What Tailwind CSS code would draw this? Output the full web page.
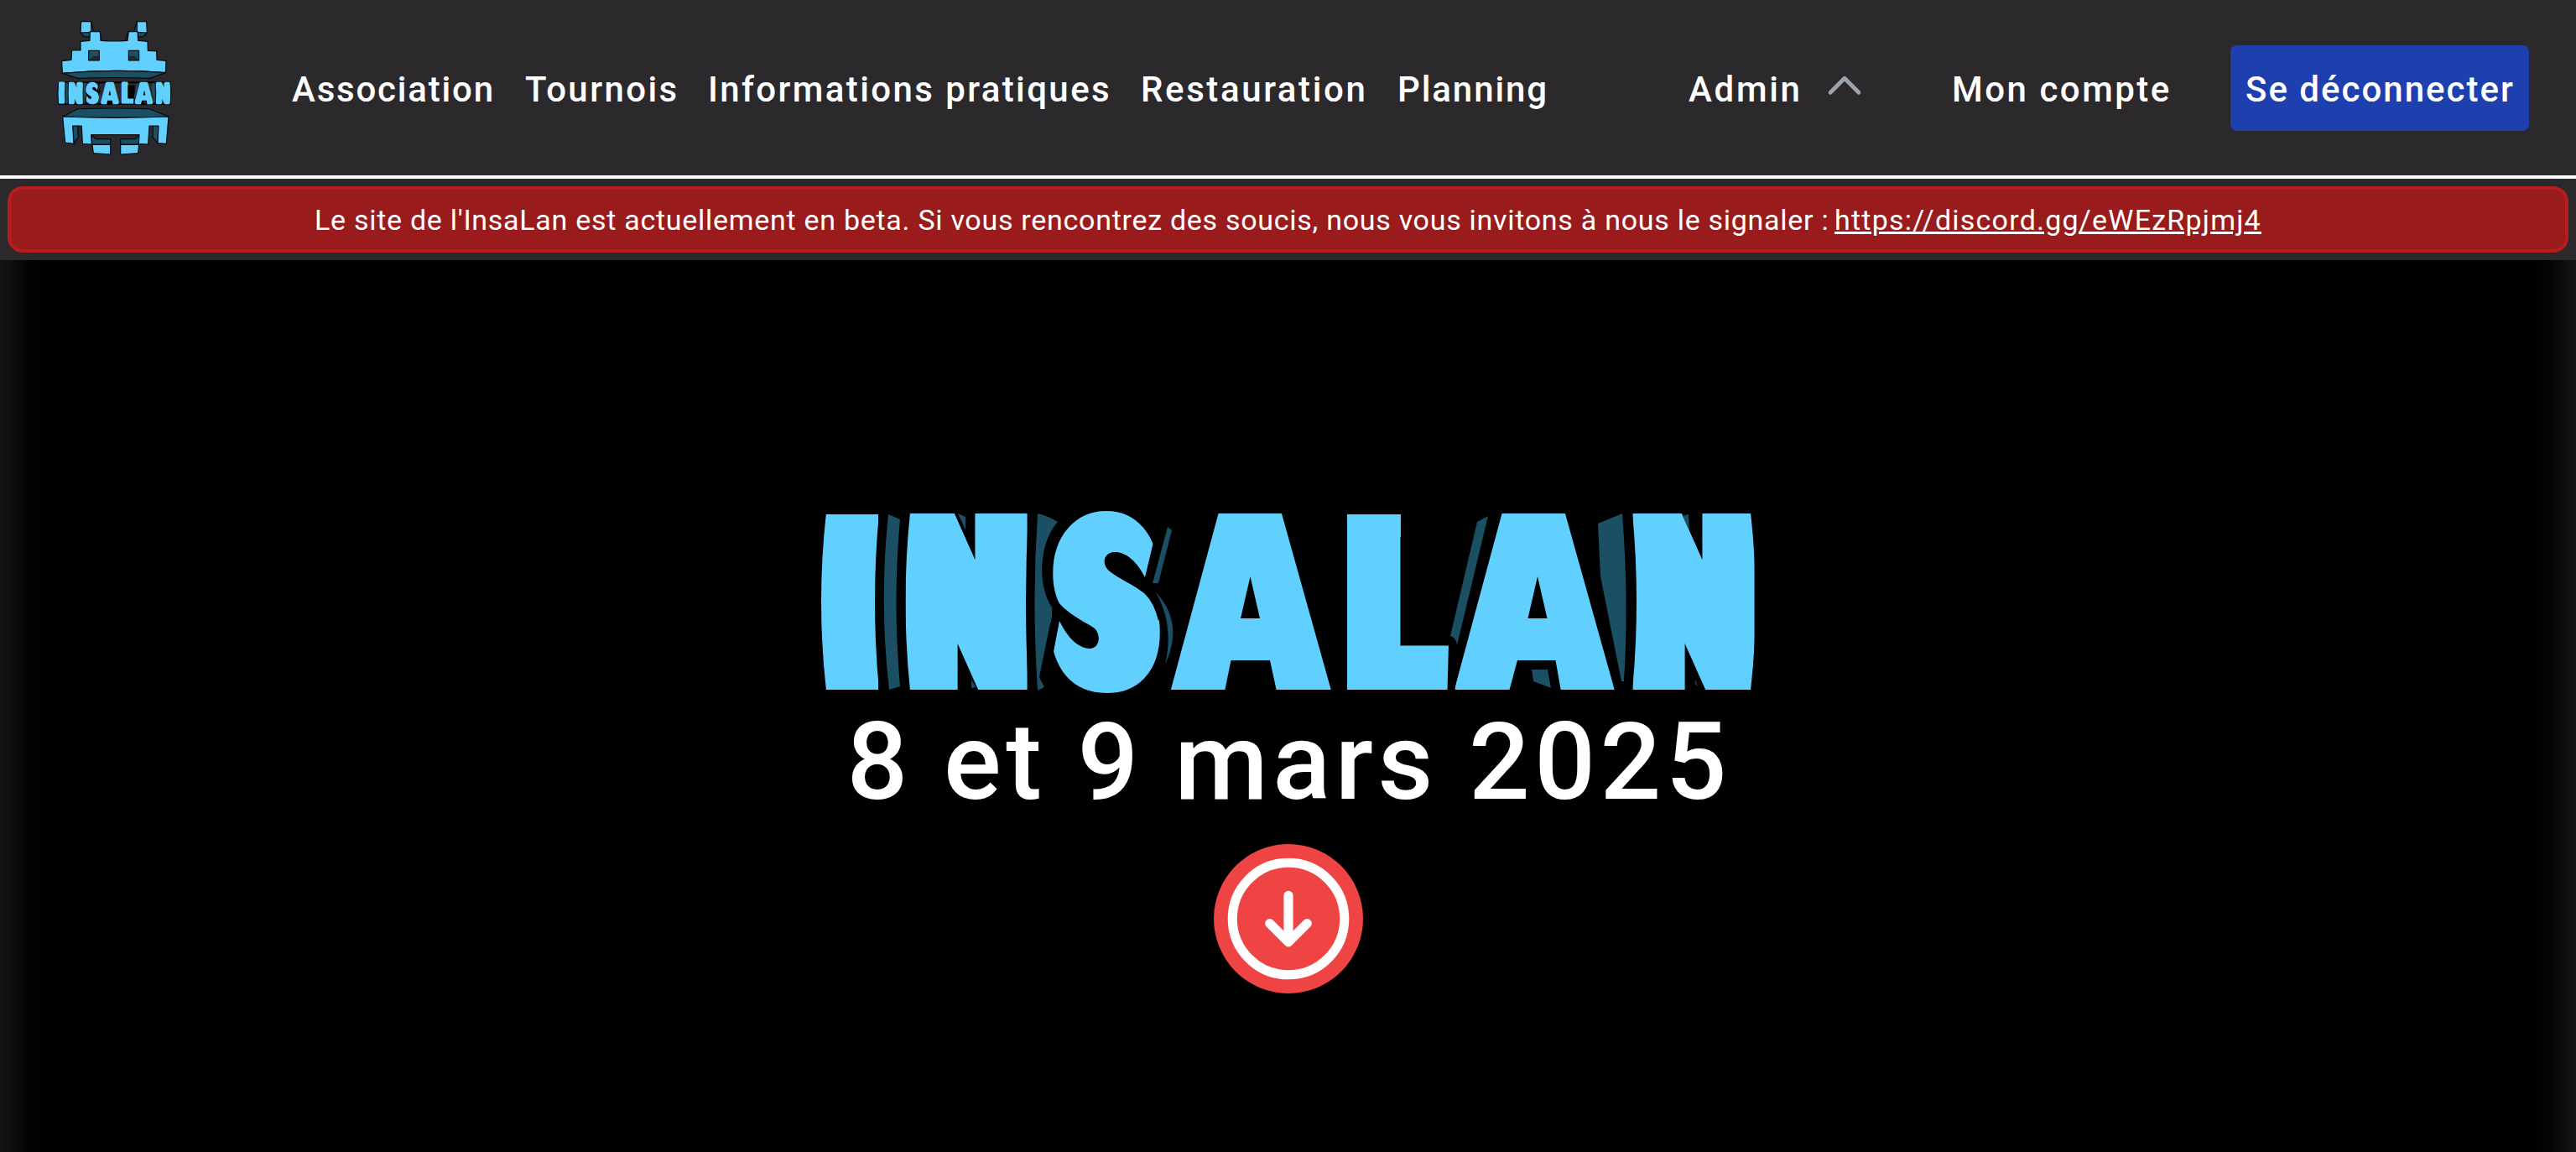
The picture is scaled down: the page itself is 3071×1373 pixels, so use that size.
<!DOCTYPE html>
<html lang="fr">
<head>
<meta charset="utf-8">
<title>InsaLan</title>
<script src="https://cdn.jsdelivr.net/npm/@tailwindcss/browser@4"></script>
</head>
<body class="h-screen overflow-hidden bg-black text-white font-['Roboto',sans-serif] flex flex-col">
  <header class="h-[213px] shrink-0 bg-[#2c292d] border-b-4 border-white flex items-center text-[42px] font-medium whitespace-nowrap">
    <svg class="ml-10 w-[200px] h-[209px] shrink-0" viewBox="0 0 600 627" stroke="#050a0c" stroke-width="3.5" stroke-linejoin="round">
      <!-- antennas -->
      <g fill="#1b4f63">
        <path d="M206 77L214 110L196 133L180 130L168 117Z"/><path d="M370 77L360 110L378 133L394 130L406 117Z"/>
        <path d="M236 113L245 147H238Z"/><path d="M338 113L329 147H338Z"/>
      </g>
      <g fill="#62d0ff">
        <path d="M170 77H206V115L168 117Z"/><path d="M370 77H404L406 117L370 115Z"/>
        <path d="M168 148L201 145L202 113H238L240 145Q288 149 336 145L340 113H372L374 145L408 148L409 181L440 183L441 214L474 217L472 260Q288 245 103 262L101 218L135 214L137 180L168 180Z"/>
      </g>
      <path fill="#1b4f63" d="M103 262Q288 245 472 260L416 280Q288 275 158 280Z"/>
      <g fill="#1b4f63"><path d="M197 181H235V216H197Z"/><path d="M340 181H377V216H340Z"/></g>
      <g fill="#2c292d" stroke-width="2"><path d="M214 203H234V215H199Z"/><path d="M341 203H360L375 215H341Z"/></g>
      <!-- lower body -->
      <g fill="#1b4f63">
        <path d="M104 417L158 390Q288 384 416 390L483 417Q290 425 104 417Z"/>
        <path d="M140 450H158L160 490L144 514Z"/><path d="M447 450H428L426 490L444 512Z"/>
        <path d="M206 482L222 497H275V517H210Z"/><path d="M378 482L365 497H311V517H376Z"/>
      </g>
      <g fill="#62d0ff">
        <path d="M104 417Q290 425 483 417L475 514L444 512L447 450H414L410 516L376 514L378 482H206L208 516L175 514L172 450H140L144 514L113 510Z"/>
        <path d="M210 517H275V552L214 548Z"/><path d="M311 517H377L374 548L311 552Z"/>
      </g>
      <use href="#word" stroke="none" transform="translate(-265.5 70.5) scale(.361 .3665)"/>
    </svg>
    <nav class="ml-[108px] pt-1 flex">
      <a class="w-[278px] tracking-[1.8px]">Association</a>
      <a class="w-[218px] tracking-[2.4px]">Tournois</a>
      <a class="w-[516px] tracking-[2.4px]">Informations pratiques</a>
      <a class="w-[306px] tracking-[2.6px]">Restauration</a>
      <a class="w-[347px] tracking-[1.9px]">Planning</a>
      <a class="w-[157px] tracking-[2.7px]">Admin</a>
    </nav>
    <svg class="size-[58px] shrink-0 -mt-1" viewBox="0 0 24 24" fill="none" stroke="#9ca3af" stroke-width="2" stroke-linecap="round" stroke-linejoin="round"><path d="M5 15l7-7 7 7"/></svg>
    <a class="ml-[99px] w-[332px] pt-1 tracking-[2.5px]">Mon compte</a>
    <button class="w-[356px] h-[102px] mt-px pl-[18px] pt-[3px] rounded-[8px] bg-[#1e40af] text-left font-medium tracking-[2px]">Se déconnecter</button>
  </header>

  <div class="h-[97px] shrink-0 bg-[#2c292d] p-[9px]">
    <p class="h-[79px] pt-0.5 flex items-center bg-[#991b1b] border-4 border-[#b91c1c] rounded-[18px] text-[34px] whitespace-nowrap pl-[362px]">
      <span class="w-[1812px] tracking-[0.72px]">Le site de l'InsaLan est actuellement en beta. Si vous rencontrez des soucis, nous vous invitons à nous le signaler :</span>
      <a class="underline tracking-[1.22px]">https://discord.gg/eWEzRpjmj4</a>
    </p>
  </div>

  <main class="grow flex flex-col items-center pt-[280px] bg-[linear-gradient(to_right,#151417,#0d0d0e_16px,#040404_32px,#000_54px,#000_calc(100%-54px),#040404_calc(100%-32px),#0d0d0e_calc(100%-16px),#151417)]">
    <svg class="w-[1172px] h-[250px] shrink-0" viewBox="950 590 1172 250">
      <g id="word">
        <!-- black outline behind the whole word -->
        <path fill="none" stroke="#000" stroke-width="18" stroke-linejoin="round" d="M985 612H1226L1250 612H1380L1450 612H1920L2088 612Q2098 717 2088 822H985Q973 717 985 612"/>
        <g fill="#62d0ff" stroke="#62d0ff" stroke-width="36" font-family="Inter, sans-serif" font-weight="900" font-size="239.5">
          <text transform="translate(980 809) scale(.9 1)" font-size="251.7" stroke-width="26">I</text>
          <text transform="translate(1084.500 804) scale(.733 1)">N</text>
          <text transform="translate(1260 806) scale(.71 1)" font-size="243">S</text>
          <text transform="translate(1412 804) scale(.832 1)">A</text>
          <text transform="translate(1607 809) scale(.845 1)" font-size="251.7" stroke-width="26">L</text>
          <text transform="translate(1750 804) scale(.832 1)">A</text>
          <text transform="translate(1951.500 804) scale(.733 1)">N</text>
        </g>
        <!-- cut-outs -->
        <g fill="#000">
          <path d="M976 611H985Q973 717 985 823H976Z"/><path d="M1052 611H1048Q1038 717 1048 823H1052Z"/>
          <path d="M1076 611H1085Q1074 717 1085 823H1076Z"/><path d="M1229 611H1226Q1220 717 1226 824H1229Z"/>
          <path d="M1942 611H1946Q1956 717 1946 823H1942Z"/><path d="M2096 611H2087Q2099 717 2087 823H2096Z"/>
          <path d="M1365 688C1352 662 1336 657 1328 658C1315 659 1313 673 1323 681C1334 690 1352 697 1364 707Q1376 718 1381 740L1396 705L1392 626L1381 621Z"/>
          <path d="M1263 740C1274 763 1288 773 1299 773C1311 773 1313 757 1305 749C1296 742 1276 735 1259 715L1248 712L1254 733L1238 809L1249.500 811Z"/>
          <path d="M1490.500 687L1502 737H1479Z"/><path d="M1467.500 787H1514L1522 824H1460Z"/>
          <path d="M1669.500 640H1738V769.500H1669.500Z"/><path d="M1727 768H1740L1734.500 823H1725.500Z"/>
          <path d="M1833 687L1844.500 737H1821.500Z"/><path d="M1809 787H1854.500L1861 824H1799Z"/>
        </g>
        <!-- extruded sides -->
        <g fill="#1b4f63">
          <path d="M1059 613L1073 619Q1064 718 1073 818L1060 822Q1048 718 1059 613Z"/>
          <path d="M1142 612L1151 616V632Z"/><path d="M1158 810L1163 819L1158 820Z"/>
          <path d="M1237 612Q1250 615 1261 622C1240 645 1235 695 1254 724V733L1239 807L1245 819L1237 823Q1230 717 1237 612Z"/>
          <path d="M1392 628L1397 632L1381 695H1374Z"/><path d="M1378 706Q1412 742 1389 792Q1400 745 1378 706Z"/>
          <path d="M1761 622L1774 615L1737 769Q1736 760 1729 758Z"/>
          <path d="M1905 624L1934 612Q1942 715 1936 812H1933L1908 687Z"/>
          <path d="M1826 798H1845L1849 820L1828 812Z"/>
          <path d="M2006 615L2013 613L2014 632Z"/><path d="M2021 810L2024 818L2021 815Z"/>
        </g>
      </g>
    </svg>
    <h1 class="mt-1 h-[128px] leading-[128px] w-[1052px] text-[128px] font-medium tracking-[5.5px] whitespace-nowrap">8 et 9 mars 2025</h1>
    <div class="mt-[34px] size-[178px] shrink-0 rounded-full bg-[#ef4444]">
      <svg class="size-full" viewBox="0 0 24 24" fill="none" stroke="#fff" stroke-width="1.5" stroke-linecap="round" stroke-linejoin="round"><path d="m9 12.75 3 3m0 0 3-3m-3 3v-7.5M21 12a9 9 0 1 1-18 0 9 9 0 0 1 18 0Z"/></svg>
    </div>
  </main>
</body>
</html>
